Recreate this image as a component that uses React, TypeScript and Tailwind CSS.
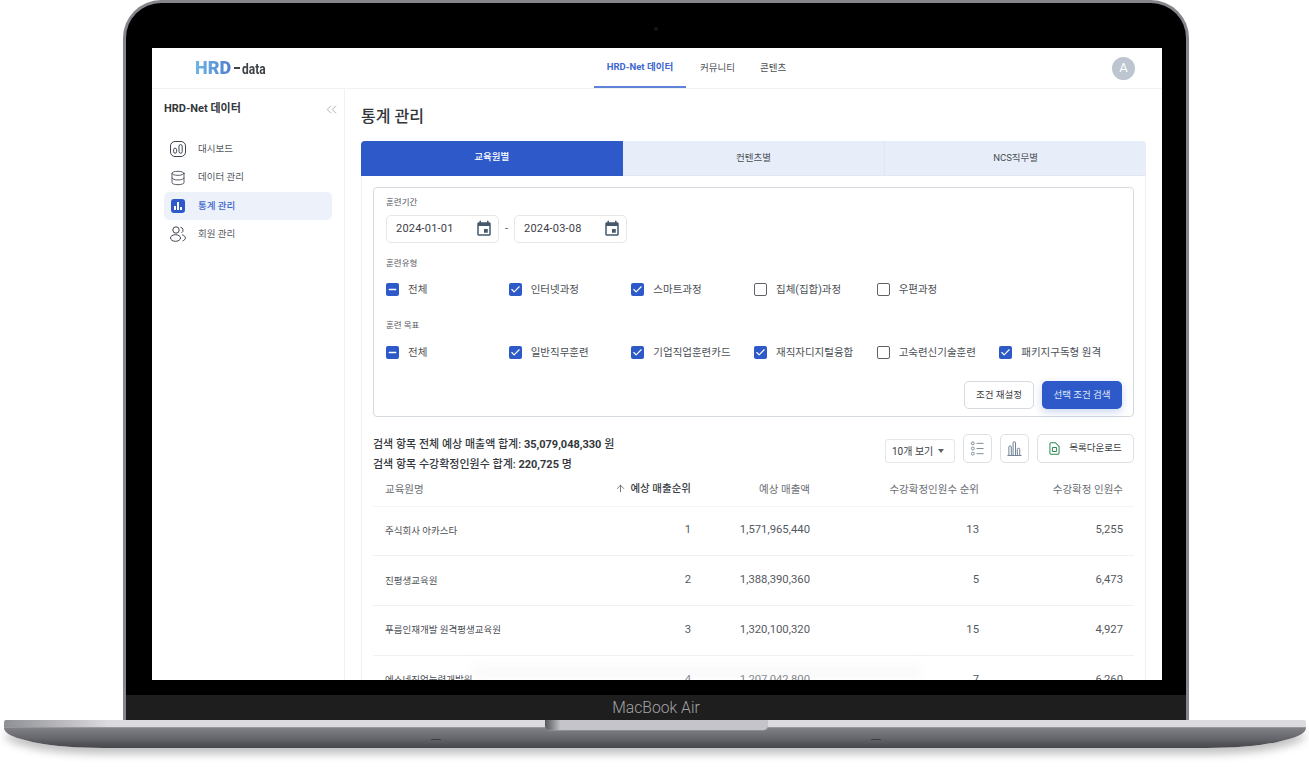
import { ArrowUp, Check, ChevronsLeft, Database, Minus } from 'lucide-react'

const fontStack = 'font-["Roboto","Noto_Sans_CJK_KR",sans-serif]'

const Calendar = () => (
  <svg viewBox="0 0 24 24" className="w-[18px] h-[18px]" fill="#46596b">
    <path d="M17 12h-5v5h5v-5zM16 1v2H8V1H6v2H5c-1.11 0-1.99.9-1.99 2L3 19c0 1.1.89 2 2 2h14c1.1 0 2-.9 2-2V5c0-1.1-.9-2-2-2h-1V1h-2zm3 18H5V8h14v11z" />
  </svg>
)

const DashIcon = () => (
  <svg viewBox="0 0 16 16" className="w-4 h-4" fill="none" stroke="#3f4650" strokeWidth="1">
    <rect x="0.5" y="0.5" width="15" height="15" rx="4.5" />
    <rect x="3.6" y="7.2" width="3" height="5" rx="1.5" />
    <rect x="9" y="3.6" width="3.2" height="8.6" rx="1.6" />
  </svg>
)

const UsersIcon = () => (
  <svg viewBox="0 0 16 16" className="w-4 h-4" fill="none" stroke="#3f4650" strokeWidth="1">
    <circle cx="6" cy="4" r="3.2" />
    <ellipse cx="5.5" cy="12" rx="5" ry="3.3" />
    <path d="M10.5 1.2a3 3 0 0 1 1 5.6M12 8.8c2 .5 3.4 1.7 3.4 3.1s-1.200 2.500-2.900 3" />
  </svg>
)

const StatsIcon = () => (
  <span className="w-[14px] h-[14px] mx-px rounded-[3px] bg-[#2d5ac8] flex items-end justify-center gap-px pb-[3px]">
    <span className="w-[2px] h-[4px] bg-white" />
    <span className="w-[2px] h-[8px] bg-white" />
    <span className="w-[2px] h-[3px] bg-white" />
  </span>
)

type Opt = { label: string; state: 'on' | 'off' | 'mixed' }

const CheckItem = ({ label, state }: Opt) => (
  <div className="flex items-center gap-[9px]">
    {state === 'off' ? (
      <span className="w-[13px] h-[13px] rounded-[2px] border-[1.5px] border-[#5f6368] bg-white" />
    ) : (
      <span className="w-[13px] h-[13px] rounded-[2px] bg-[#2d5ac8] flex items-center justify-center text-white">
        {state === 'on' ? <Check size={11} strokeWidth={2.5} /> : <Minus size={11} strokeWidth={3} />}
      </span>
    )}
    <span className="text-[10.5px] text-[#4b4f55] whitespace-nowrap">{label}</span>
  </div>
)

const typeOpts: Opt[] = [
  { label: '전체', state: 'mixed' },
  { label: '인터넷과정', state: 'on' },
  { label: '스마트과정', state: 'on' },
  { label: '집체(집합)과정', state: 'off' },
  { label: '우편과정', state: 'off' },
]

const goalOpts: Opt[] = [
  { label: '전체', state: 'mixed' },
  { label: '일반직무훈련', state: 'on' },
  { label: '기업직업훈련카드', state: 'on' },
  { label: '재직자디지털융합', state: 'on' },
  { label: '고숙련신기술훈련', state: 'off' },
  { label: '패키지구독형 원격', state: 'on' },
]

const rows = [
  ['주식회사 아카스타', '1', '1,571,965,440', '13', '5,255'],
  ['진평생교육원', '2', '1,388,390,360', '5', '6,473'],
  ['푸름인재개발 원격평생교육원', '3', '1,320,100,320', '15', '4,927'],
  ['에스네직업능력개발원', '4', '1,207,042,800', '7', '6,260'],
]

const menu = [
  { label: '대시보드', icon: <DashIcon /> },
  { label: '데이터 관리', icon: <Database size={16} strokeWidth={1.3} color="#3f4650" /> },
  { label: '통계 관리', icon: <StatsIcon />, active: true },
  { label: '회원 관리', icon: <UsersIcon /> },
]

const DateBox = ({ value }: { value: string }) => (
  <div className="w-[113px] h-[28px] rounded-[5px] border border-[#e4e6ea] flex items-center justify-between pl-[9px] pr-[5px]">
    <span className="text-[11px] text-[#3c4046] tracking-[0.2px]">{value}</span>
    <Calendar />
  </div>
)

const Screen = () => (
  <div className={`relative w-[1010px] h-[632px] bg-white overflow-hidden ${fontStack}`}>
    {/* top bar */}
    <header className="h-[41px] border-b border-[#f1f2f4] flex items-center relative">
      <div className="w-[442px] pl-[43px] flex items-baseline shrink-0">
        <span className="text-[18px] leading-none font-black bg-gradient-to-r from-[#6fb6e6] to-[#4f7fd0] bg-clip-text text-transparent">HRD</span>
        <span className="w-[6px] h-[2px] bg-[#444] ml-[3px] mr-[2px] self-center" />
        <span className="text-[15px] leading-none font-bold text-[#3d4247] scale-x-[.8] origin-left">data</span>
      </div>
      <nav className="flex items-center h-full text-[9.5px] text-[#4b4f55] whitespace-nowrap">
        <span className="h-full w-[92px] flex items-center justify-center font-bold text-[#3d68cf] border-b-2 border-[#5f83d8]">HRD-Net 데이터</span>
        <span className="ml-[14px] w-[34px] text-center">커뮤니티</span>
        <span className="ml-[26px] w-[26px] text-center">콘텐츠</span>
      </nav>
      <div className="ml-auto mr-[27px] w-[23px] h-[23px] rounded-full bg-[#bcc5d0] text-white text-[13px] flex items-center justify-center">A</div>
    </header>

    <div className="flex">
      {/* sidebar */}
      <aside className="w-[193px] shrink-0 h-[600px] border-r border-[#f0f1f3] px-3">
        <div className="h-[38px] flex items-center justify-between mt-px">
          <span className="text-[11px] font-bold text-[#33373c]">HRD-Net 데이터</span>
          <ChevronsLeft size={17} strokeWidth={1} color="#8d9299" className="-mr-[8px]" />
        </div>
        <ul className="mt-[7px]">
          {menu.map((m) => (
            <li
              key={m.label}
              className={`h-[28.4px] w-[168px] rounded-[5px] flex items-center gap-[12px] px-[6px] text-[9.5px] ${m.active ? 'bg-[#edf1fa] text-[#3d68cf] font-medium' : 'text-[#55595f]'}`}
            >
              {m.icon}
              <span>{m.label}</span>
            </li>
          ))}
        </ul>
      </aside>

      {/* main */}
      <main className="flex-1 pl-4 pr-4">
        <h1 className="h-[52px] pt-[4px] flex items-center text-[16px] font-medium text-[#33373c]">통계 관리</h1>
        <div className="grid grid-cols-3 h-[35px] text-[9.5px]">
          <div className="bg-[#2d5ac8] text-white font-medium rounded-tl-[4px] flex items-center justify-center pb-[2px]">교육원별</div>
          <div className="bg-[#e7edf9] text-[#4b4f55] flex items-center justify-center border-b border-[#e2e6ee]">컨텐츠별</div>
          <div className="bg-[#e7edf9] text-[#4b4f55] rounded-tr-[4px] flex items-center justify-center border-l border-b border-[#e2e6ee]">NCS직무별</div>
        </div>
        <section className="border-x border-[#eef0f3] px-[11px] pt-[11px] pb-10">
          <div className="h-[230px] rounded-[4px] border border-[#d5d9e0] pl-3 pr-[11px] pt-[9px]">
            <div className="text-[8.5px] leading-[10px] text-[#55595f]">훈련기간</div>
            <div className="flex items-center mt-[8px]">
              <DateBox value="2024-01-01" />
              <span className="w-[15px] text-center text-[11px] text-[#55595f]">-</span>
              <DateBox value="2024-03-08" />
            </div>
            <div className="text-[8.5px] leading-[10px] text-[#55595f] mt-[15px]">훈련유형</div>
            <div className="grid grid-cols-[repeat(6,122.67px)] mt-[14px] h-[13px] items-center">
              {typeOpts.map((o) => <CheckItem key={o.label} {...o} />)}
            </div>
            <div className="text-[8.5px] leading-[10px] text-[#55595f] mt-[25px]">훈련 목표</div>
            <div className="grid grid-cols-[repeat(6,122.67px)] mt-[15px] h-[13px] items-center">
              {goalOpts.map((o) => <CheckItem key={o.label} {...o} />)}
            </div>
            <div className="flex justify-end gap-2 mt-[23px]">
              <button className="w-[70px] h-[28px] rounded-[5px] border border-[#d5d9e0] bg-white text-[9.5px] text-[#3c4046]">조건 재설정</button>
              <button className="w-[80px] h-[28px] rounded-[5px] bg-[#2d5ac8] text-[9.5px] text-[#dfe6f7] shadow-[0_3px_8px_rgba(45,90,200,0.25)]">선택 조건 검색</button>
            </div>
          </div>

          <div className="flex justify-between mt-[17px] h-[38px]">
            <div className="pt-px text-[11px] leading-[20px] font-medium text-[#33373c]">
              <div>검색 항목 전체 예상 매출액 합계: <span className="font-bold">35,079,048,330</span> 원</div>
              <div>검색 항목 수강확정인원수 합계: <span className="font-bold">220,725</span> 명</div>
            </div>
            <div className="flex items-start gap-2">
              <div className="w-[70px] h-[24px] mt-[5px] rounded-[3px] border border-[#e4e6ea] text-[10px] text-[#3c4046] flex items-center justify-between pl-[6px] pr-[10px]">
                10개 보기
                <span className="border-x-[3.5px] border-x-transparent border-t-[4px] border-t-[#5f6368]" />
              </div>
              <button className="w-[29px] h-[29px] rounded-[5px] border border-[#dcdfe4] flex items-center justify-center">
                <svg viewBox="0 0 16 16" className="w-[15px] h-[15px]" fill="none" stroke="#7a8794" strokeWidth="1">
                  <rect x="1.500" y="1" width="3" height="3" rx="1.400" />
                  <rect x="1.500" y="6.500" width="3" height="3" rx="1.400" />
                  <rect x="1.500" y="12" width="3" height="3" rx="1.400" />
                  <path d="M7 2.500h7.500M7 8h7.500M7 13.500h7.500" />
                </svg>
              </button>
              <button className="w-[29px] h-[29px] rounded-[5px] border border-[#dcdfe4] flex items-center justify-center">
                <svg viewBox="0 0 16 16" className="w-[15px] h-[15px]" fill="none" stroke="#66788a" strokeWidth="1">
                  <path d="M.5 15.500h15M2 15V6.500a1.200 1.200 0 0 1 2.600 0V15M6.500 15V2a1.300 1.300 0 0 1 2.600 0v13M11 15V9a1.300 1.300 0 0 1 2.600 0v6" />
                </svg>
              </button>
              <button className="w-[97px] h-[29px] rounded-[5px] border border-[#dcdfe4] flex items-center justify-center gap-[9px] text-[9.5px] text-[#3c4046]">
                <svg viewBox="0 0 12 14" className="w-[11px] h-[13px]" fill="none" stroke="#2f8a52" strokeWidth="1.100">
                  <path d="M2.500.7h4.500l4 4v7a1.500 1.500 0 0 1-1.500 1.500h-7A1.500 1.500 0 0 1 1 11.700v-9.500A1.500 1.500 0 0 1 2.500.7z" />
                  <rect x="3.700" y="6" width="4.600" height="4.200" rx=".8" />
                </svg>
                목록다운로드
              </button>
            </div>
          </div>

          <table className="w-full table-fixed text-[#55595f]">
            <thead>
              <tr className="h-[34px] border-b border-[#f3f4f6] text-[10.5px] text-right whitespace-nowrap">
                <th className="w-[212px] pl-3 pt-[2px] text-left font-normal text-[#6a6e74]">교육원명</th>
                <th className="w-[106px] pt-[2px] font-medium text-[#3c4046]">
                  <span className="inline-flex items-center gap-[4px]">
                    <ArrowUp size={11} strokeWidth={1.5} />
                    예상 매출순위
                  </span>
                </th>
                <th className="w-[119px] pt-[2px] font-normal text-[#6a6e74]">예상 매출액</th>
                <th className="w-[169px] pt-[2px] font-normal text-[#6a6e74]">수강확정인원수 순위</th>
                <th className="pr-[11px] pt-[2px] font-normal text-[#6a6e74]">수강확정 인원수</th>
              </tr>
            </thead>
            <tbody>
              {rows.map((r) => (
                <tr key={r[0]} className="h-[49.800px] border-b border-[#eef0f2] text-right text-[11.3px]">
                  <td className="pl-3 text-left text-[9.500px] text-[#4b4f55] whitespace-nowrap">{r[0]}</td>
                  <td>{r[1]}</td>
                  <td>{r[2]}</td>
                  <td>{r[3]}</td>
                  <td className="pr-[11px]">{r[4]}</td>
                </tr>
              ))}
            </tbody>
          </table>
        </section>
      </main>
    </div>
    {/* soft reflection from the base over the last row */}
    <div className="absolute bottom-0 left-[320px] w-[450px] h-[16px] bg-[#f2f2f2]/40 blur-[5px]" />
  </div>
)

export default function App() {
  return (
    <div className={`w-[1309px] h-[767px] bg-white overflow-hidden ${fontStack}`}>
      {/* lid */}
      <div className="relative ml-[123px] w-[1066px] h-[720px] rounded-t-[38px] border-x-[3px] border-t-[3px] border-[#85868c] bg-black flex flex-col">
        <span className="absolute top-[24px] left-[528px] w-[4px] h-[4px] rounded-full bg-[#15151c]" />
        <div className="flex-1 pl-[26px] pt-[45px]">
          <Screen />
        </div>
        <div className="h-[25px] bg-[#1e1e1e] flex items-center justify-center text-[15.700px] text-[#a3a3a6] font-light">MacBook Air</div>
      </div>
      {/* base */}
      <div className="relative ml-[4px] w-[1302px] h-[28px]">
        <div className="h-[8px] rounded-tl-[2px] rounded-tr-[2px] bg-gradient-to-r from-[#8f9095] via-[#dcdce0] via-[8%] to-[#dcdce0] border-b border-[#9a9a9e]" />
        <div className="h-[20px] rounded-b-[100px_20px] shadow-[0_6px_9px_rgba(0,0,0,0.25)] bg-gradient-to-b from-[#808086] via-[#67686d] to-[#45464b]" />
        <div className="absolute top-0 left-[541px] w-[223px] h-[11px] rounded-b-[5px] bg-gradient-to-r from-[#55565a] via-[#c4c4ca] via-[7%] to-[#c4c4ca] border-b border-[#8e8e92]" />
        <div className="absolute top-[19px] left-[427px] w-[10px] h-[1px] bg-[#3c3d41]" />
        <div className="absolute top-[19px] left-[867px] w-[10px] h-[1px] bg-[#3c3d41]" />
      </div>
    </div>
  )
}
